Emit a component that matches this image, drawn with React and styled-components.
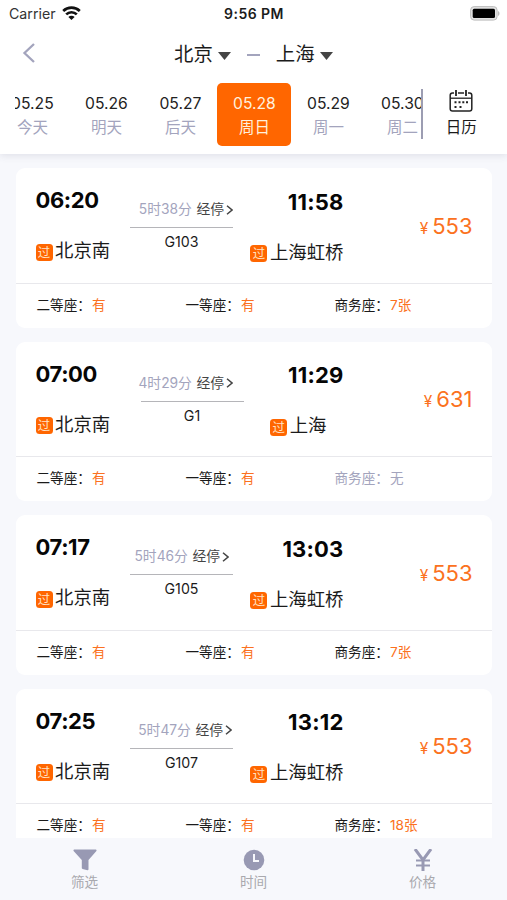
import React from "react";
import styled, { createGlobalStyle } from "styled-components";

const ORANGE = "#ff6600";
const MUTED = "#a3a4bd";

const GlobalStyle = createGlobalStyle`
  *, *::before, *::after { box-sizing: border-box; }
  body {
    margin: 0;
    background: #f7f8fc;
    font-family: Inter, "Noto Sans CJK SC", sans-serif;
    color: #1b1b1b;
  }
`;

const Screen = styled.main`
  width: 507px;
  height: 900px;
  display: flex;
  flex-direction: column;
  overflow: hidden;
  background: #f7f8fc;
  white-space: nowrap;
`;

const Header = styled.header`
  flex: none;
  height: 154px;
  background: #fff;
  box-shadow: 0 2px 7px rgba(80, 80, 110, 0.13);
`;

const StatusBar = styled.div`
  height: 28px;
  padding: 0 7px 0 9px;
  display: grid;
  grid-template-columns: 1fr auto 1fr;
  align-items: center;
  line-height: 28px;
  font-size: 14px;
`;

const Carrier = styled.div`
  display: flex;
  align-items: center;
  gap: 6px;
  font-size: 14.2px;
  color: #333;
  svg { margin-top: -2px; }
`;

const Clock = styled.div`
  font-size: 14px;
  font-weight: 600;
  letter-spacing: 0.45px;
  margin-right: 1px;
`;

const Battery = styled.svg`
  justify-self: end;
  margin-top: -2px;
`;

const NavBar = styled.nav`
  height: 55px;
  display: flex;
  align-items: center;
  padding: 0 0 4px 22px;
`;

const BackIcon = styled.svg`
  margin: -2px 138px 0 0;
`;

const City = styled.div`
  display: flex;
  align-items: center;
  gap: 5px;
  font-size: 19.4px;
  line-height: 30px;
`;

const Caret = styled.svg`
  margin-top: 4px;
`;

const Dash = styled.span`
  width: 13px;
  height: 2px;
  margin: 3px 16px 0;
  background: ${MUTED};
`;

const DateBar = styled.div`
  display: flex;
  height: 63px;
  padding-left: 15px;
`;

const DateStrip = styled.div`
  width: 407px;
  display: flex;
  overflow: hidden;
`;

const DateTab = styled.div`
  flex: none;
  width: 74px;
  height: 63px;
  padding-top: 9.5px;
  border-radius: 5px;
  text-align: center;
  background: ${(p) => (p.$active ? ORANGE : "transparent")};
  color: ${(p) => (p.$active ? "#fff0dd" : "#222")};
  &:first-child { margin-left: -19.6px; }
`;

const DateNumber = styled.div`
  height: 23px;
  line-height: 22px;
  font-size: 15.7px;
`;

const DateLabel = styled.div`
  height: 24px;
  line-height: 24px;
  font-size: 15.5px;
  color: ${(p) => (p.$active ? "#fff0dd" : MUTED)};
`;

const DateDivider = styled.div`
  width: 1.5px;
  height: 50px;
  margin: 6px 0 0 -1px;
  background: #9c9db2;
`;

const CalendarButton = styled.div`
  flex: 1;
  display: flex;
  flex-direction: column;
  align-items: center;
  padding: 6px 7px 0 0;
  font-size: 15.5px;
  line-height: 29px;
`;

const TrainList = styled.section`
  flex: 1;
  min-height: 0;
  overflow: hidden;
  padding: 14px 15px 0 16px;
  display: flex;
  flex-direction: column;
  gap: 14px;
`;

const Card = styled.article`
  flex: none;
  height: 159.6px;
  border-radius: 9px;
  background: #fff;
`;

const Trip = styled.div`
  height: 115.5px;
  display: flex;
  padding: 20px 19.5px 0;
  border-bottom: 1.5px solid #e8e8ec;
`;

const Stop = styled.div`
  width: ${(p) => (p.$arrival ? 96 : 75)}px;
  display: flex;
  flex-direction: column;
  align-items: ${(p) => (p.$arrival ? "flex-end" : "flex-start")};
  padding-top: ${(p) => (p.$arrival ? 1.5 : 0)}px;
`;

const Time = styled.div`
  height: 25px;
  line-height: 25px;
  font-size: 22px;
  font-weight: 700;
  letter-spacing: ${(p) => (p.$arrival ? 0.2 : -0.4)}px;
  color: #060606;
`;

const Station = styled.div`
  display: flex;
  align-items: center;
  gap: 2.5px;
  height: 26px;
  line-height: 26px;
  margin-top: 24px;
  margin-right: ${(p) => (p.$short ? 17 : 0)}px;
  font-size: 18.4px;
`;

const PassBadge = styled.span`
  width: 17px;
  height: 17px;
  margin-top: 4px;
  border-radius: 3.5px;
  background: ${ORANGE};
  color: #ffe3c6;
  font-size: 12.5px;
  line-height: 17px;
  text-align: center;
`;

const Middle = styled.div`
  width: 137px;
  padding: 12px 14.5px 0 0;
  display: flex;
  flex-direction: column;
  align-items: flex-end;
`;

const Duration = styled.div`
  display: flex;
  align-items: center;
  gap: 4.5px;
  height: 19px;
  line-height: 19px;
  font-size: 13.8px;
  color: #444;
`;

const Elapsed = styled.span`
  color: ${MUTED};
`;

const StopsLink = styled.span`
  display: flex;
  align-items: center;
  gap: 2px;
`;

const TrainNumber = styled.div`
  width: 103px;
  margin: 8px ${(p) => (p.$shifted ? -10.5 : 0)}px 0 0;
  border-top: 1.5px solid #b5b5b9;
  padding-top: 4px;
  line-height: 19px;
  font-size: 14.2px;
  text-align: center;
`;

const Price = styled.div`
  flex: 1;
  display: flex;
  justify-content: flex-end;
  align-items: baseline;
  gap: 4px;
  padding-top: 22.5px;
  font-size: 22px;
  line-height: 30px;
  color: #fb7120;
`;

const Yen = styled.span`
  font-size: 15.5px;
`;

const Seats = styled.div`
  display: grid;
  grid-template-columns: repeat(3, 149px);
  padding-left: 20.5px;
  height: 44px;
  line-height: 43px;
  font-size: 13.6px;
`;

const Seat = styled.div`
  display: flex;
  color: ${(p) => (p.$soldOut ? MUTED : "#1b1b1b")};
`;

const SeatName = styled.span`
  width: 55.5px;
`;

const SeatCount = styled.span`
  color: ${(p) => (p.$soldOut ? MUTED : "#fb7120")};
`;

const TabBar = styled.footer`
  flex: none;
  height: 62px;
  display: grid;
  grid-template-columns: repeat(3, 1fr);
  background: #f7f8fc;
`;

const Tab = styled.div`
  display: flex;
  flex-direction: column;
  align-items: center;
  padding-top: 11px;
  font-size: 13.6px;
  line-height: 18px;
  color: #a9a9ae;
  svg { margin-bottom: 2px; }
`;

const dates = [
  ["05.25", "今天"],
  ["05.26", "明天"],
  ["05.27", "后天"],
  ["05.28", "周日", true],
  ["05.29", "周一"],
  ["05.30", "周二"],
];

const trains = [
  { dep: "06:20", arr: "11:58", to: "上海虹桥", time: "5时38分", no: "G103", price: 553, biz: "7张" },
  { dep: "07:00", arr: "11:29", to: "上海", time: "4时29分", no: "G1", price: 631, biz: "无" },
  { dep: "07:17", arr: "13:03", to: "上海虹桥", time: "5时46分", no: "G105", price: 553, biz: "7张", inset: 4 },
  { dep: "07:25", arr: "13:12", to: "上海虹桥", time: "5时47分", no: "G107", price: 553, biz: "18张", inset: 1 },
];

const DurationOffset = styled.div`
  margin-right: ${(p) => p.$inset || 0}px;
`;

function DownCaret() {
  return (
    <Caret width="13" height="8" viewBox="0 0 13 8">
      <path d="M0 0h13L6.5 8z" fill="#444" />
    </Caret>
  );
}

function WifiIcon() {
  return (
    <svg width="19" height="14" viewBox="0 0 19 14" fill="none" stroke="#111" strokeWidth="2.7">
      <path d="M1.2 5a12 12 0 0 1 16.6 0" />
      <path d="M4.2 8.4a7.6 7.6 0 0 1 10.6 0" />
      <path d="M9.5 14 6.4 11a4.3 4.3 0 0 1 6.2 0z" fill="#111" stroke="none" />
    </svg>
  );
}

function CalendarIcon() {
  return (
    <svg width="24" height="24" viewBox="0 0 24 24" fill="none" stroke="#222" strokeWidth="1.5">
      <path d="M5 4H3.500Q1.200 4 1.200 6.300v13.400Q1.200 22 3.500 22h17q2.300 0 2.300-2.300V6.300Q22.800 4 20.500 4H19M9 4h6" />
      <path d="M1.200 9.200h21.600" strokeWidth="1.3" />
      <path d="M7 1v6M17 1v6" strokeWidth="1.800" />
      <path d="M5.5 13.2h2M9.5 13.2h2M13.3 13.2h2M17 13.2h2M5.5 18h2M10.500 18h2" strokeWidth="2" />
    </svg>
  );
}

function SeatInfo({ name, count }) {
  const soldOut = count === "无";
  return (
    <Seat $soldOut={soldOut}>
      <SeatName>{name}：</SeatName>
      <SeatCount $soldOut={soldOut}>{count}</SeatCount>
    </Seat>
  );
}

function TrainCard({ train }) {
  const short = train.to.length === 2;
  return (
    <Card>
      <Trip>
        <Stop>
          <Time>{train.dep}</Time>
          <Station><PassBadge>过</PassBadge>北京南</Station>
        </Stop>
        <Middle>
          <DurationOffset $inset={train.inset}>
            <Duration>
              <Elapsed>{train.time}</Elapsed>
              <StopsLink>
                经停
                <svg width="7" height="10" viewBox="0 0 7 10" fill="none" stroke="#444" strokeWidth="1.5">
                  <path d="m1 .8 5 4.2-5 4.2" />
                </svg>
              </StopsLink>
            </Duration>
          </DurationOffset>
          <TrainNumber $shifted={short}>{train.no}</TrainNumber>
        </Middle>
        <Stop $arrival>
          <Time $arrival>{train.arr}</Time>
          <Station $short={short}><PassBadge>过</PassBadge>{train.to}</Station>
        </Stop>
        <Price><Yen>¥</Yen>{train.price}</Price>
      </Trip>
      <Seats>
        <SeatInfo name="二等座" count="有" />
        <SeatInfo name="一等座" count="有" />
        <SeatInfo name="商务座" count={train.biz} />
      </Seats>
    </Card>
  );
}

export default function App() {
  return (
    <>
      <GlobalStyle />
      <Screen>
        <Header>
          <StatusBar>
            <Carrier>Carrier <WifiIcon /></Carrier>
            <Clock>9:56 PM</Clock>
            <Battery width="30" height="15" viewBox="0 0 30 15">
              <rect x="0.6" y="0.6" width="26.5" height="13.5" rx="3.5" fill="#e2e2e2" stroke="#bdbdbd" />
              <path d="M28 5c2 .8 2 4.200 0 5z" fill="#bdbdbd" />
              <rect x="2.700" y="2.700" width="22.300" height="9.300" rx="1.5" fill="#000" />
            </Battery>
          </StatusBar>
          <NavBar>
            <BackIcon width="14" height="20" viewBox="0 0 14 20" fill="none" stroke={MUTED} strokeWidth="2.3">
              <path d="M12 1 2.500 10 12 19" />
            </BackIcon>
            <City>北京<DownCaret /></City>
            <Dash />
            <City>上海<DownCaret /></City>
          </NavBar>
          <DateBar>
            <DateStrip>
              {dates.map(([day, label, active]) => (
                <DateTab key={day} $active={active}>
                  <DateNumber>{day}</DateNumber>
                  <DateLabel $active={active}>{label}</DateLabel>
                </DateTab>
              ))}
            </DateStrip>
            <DateDivider />
            <CalendarButton><CalendarIcon />日历</CalendarButton>
          </DateBar>
        </Header>
        <TrainList>
          {trains.map((train) => <TrainCard key={train.no} train={train} />)}
        </TrainList>
        <TabBar>
          <Tab>
            <svg width="24" height="22" viewBox="0 0 24 22" fill="#9899b3">
              <path d="M1 .5h22q1 .5.4 1.500L15.500 11v9.200q0 1-1 1L9.600 20q-.8-.3-.8-1v-8L.6 2Q0 1 1 .5z" />
            </svg>
            筛选
          </Tab>
          <Tab>
            <svg width="22" height="22" viewBox="0 0 22 22">
              <circle cx="11" cy="11" r="10.300" fill="#9899b3" />
              <path d="M11 5v7h5" fill="none" stroke="#f7f8fc" strokeWidth="2" />
            </svg>
            时间
          </Tab>
          <Tab>
            <svg width="20" height="22" viewBox="0 0 20 22" fill="none" stroke="#9899b3" strokeWidth="3">
              <path d="m2 0 8 11 8-11M10 10v12" />
              <path d="M3 11.500h14M3 16.500h14" strokeWidth="2.200" />
            </svg>
            价格
          </Tab>
        </TabBar>
      </Screen>
    </>
  );
}
